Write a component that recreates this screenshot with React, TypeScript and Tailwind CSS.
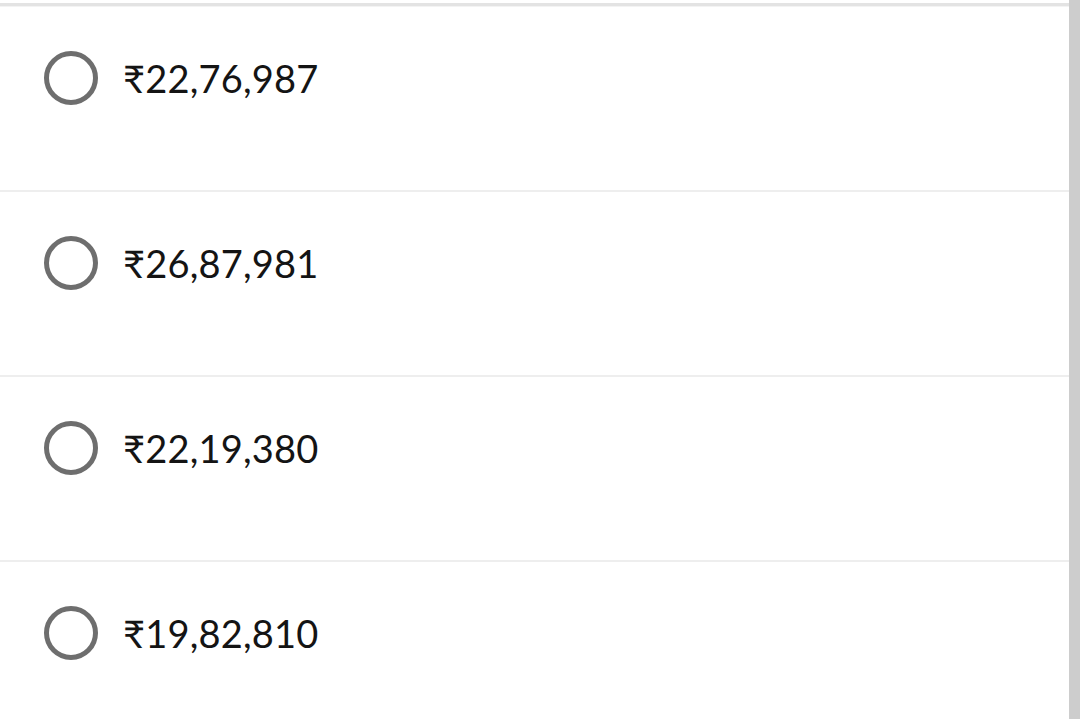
const options = ["₹22,76,987", "₹26,87,981", "₹22,19,380", "₹19,82,810"];

function Radio() {
  return (
    <span className="block w-[54px] h-[54px] shrink-0 rounded-full border-[5px] border-[#6e6e6e] bg-white" />
  );
}

export default function App() {
  return (
    <div className="flex h-[719px] w-[1080px] overflow-hidden bg-white font-['Lato','Noto_Sans',sans-serif]">
      <div className="flex-1 pt-[3px]">
        <div className="h-[3px] bg-[#e3e3e3]" />
        <div className="h-[1px] bg-[#f3f3f3]" />
        <ul>
          {options.map((opt, i) => (
            <li
              key={opt}
              className={
                i === 0
                  ? "h-[185px] border-b-2 border-[#eeeeee] pl-[44px] pt-[44px]"
                  : "h-[185px] border-b-2 border-[#eeeeee] pl-[44px] pt-[44px]"
              }
            >
              <label className="flex items-center gap-[25px]">
                <Radio />
                <span className="text-[38px] leading-none tracking-[0.2px] text-[#141414]">{opt}</span>
              </label>
            </li>
          ))}
        </ul>
      </div>
      <div className="w-[11px] bg-[#cdcdcd]" />
    </div>
  );
}
